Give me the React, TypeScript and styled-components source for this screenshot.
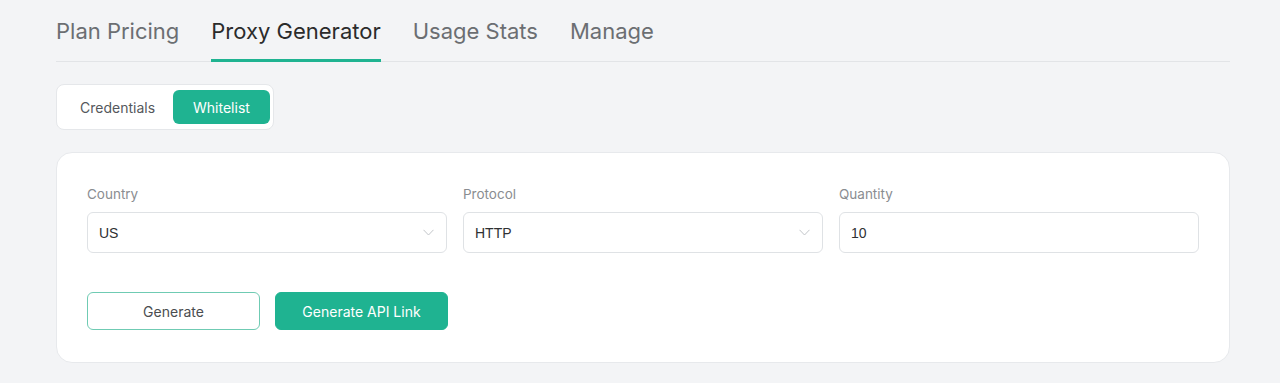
import React from 'react';
import styled, { createGlobalStyle } from 'styled-components';

const Global = createGlobalStyle`
  html, body {
    margin: 0;
    padding: 0;
    background: #f3f4f6;
    font-family: Inter, "Noto Sans", sans-serif;
  }
  * { box-sizing: border-box; }
`;

const Page = styled.div`
  padding: 0 50px 0 56px;
`;

const TabBar = styled.nav`
  display: flex;
  gap: 32px;
  padding-top: 16px;
  border-bottom: 1px solid #e2e4e7;
`;

const Tab = styled.div<{ active?: boolean }>`
  font-size: 22px;
  line-height: 30px;
  padding-bottom: 13px;
  font-weight: 400;
  color: ${p => (p.active ? '#2b2b2b' : '#6b6e72')};
  border-bottom: 3px solid ${p => (p.active ? '#1fb391' : 'transparent')};
  margin-bottom: -1px;
`;

const Segment = styled.div`
  display: inline-flex;
  margin-top: 22px;
  padding: 5px 3px 5px 5px;
  background: #fff;
  border: 1px solid #e5e7ea;
  border-radius: 8px;
`;

const SegButton = styled.button<{ active?: boolean }>`
  height: 34px;
  padding: 0 ${p => (p.active ? 20 : 18)}px;
  border: none;
  border-radius: 6px;
  font-family: inherit;
  font-size: 14px;
  background: ${p => (p.active ? '#1fb391' : 'transparent')};
  color: ${p => (p.active ? '#fff' : '#55585c')};
`;

const Card = styled.section`
  margin-top: 22px;
  background: #fff;
  border: 1px solid #e7e9ec;
  border-radius: 16px;
  padding: 31px 30px 32px 30px;
`;

const Fields = styled.div`
  display: grid;
  grid-template-columns: repeat(3, 1fr);
  gap: 16px;
`;

const Field = styled.div`
  display: flex;
  flex-direction: column;
`;

const Label = styled.label`
  font-size: 13.5px;
  line-height: 20px;
  color: #8a8d91;
  margin-bottom: 8px;
`;

const Box = styled.div`
  height: 41px;
  display: flex;
  align-items: center;
  justify-content: space-between;
  padding: 0 12px 0 11px;
  border: 1px solid #dfe2e5;
  border-radius: 6px;
  font-family: "Liberation Sans", Arial, sans-serif;
  font-size: 14px;
  color: #2f3133;
`;

const Actions = styled.div`
  display: flex;
  gap: 15px;
  margin-top: 39px;
`;

const Button = styled.button<{ primary?: boolean }>`
  width: 173px;
  height: 38px;
  border-radius: 6px;
  font-family: inherit;
  font-size: 14px;
  border: 1px solid ${p => (p.primary ? '#1fb391' : '#6fcbb3')};
  background: ${p => (p.primary ? '#1fb391' : '#fff')};
  color: ${p => (p.primary ? '#fff' : '#4a4d50')};
`;

const Chevron = () => (
  <svg width="11" height="7" viewBox="0 0 11 7" fill="none">
    <path d="M0.5 0.8 L5.5 6 L10.5 0.8" stroke="#c2c5c9" strokeWidth="1" />
  </svg>
);

export default function App() {
  return (
    <Page>
      <Global />
      <TabBar>
        <Tab>Plan Pricing</Tab>
        <Tab active>Proxy Generator</Tab>
        <Tab>Usage Stats</Tab>
        <Tab>Manage</Tab>
      </TabBar>

      <Segment>
        <SegButton>Credentials</SegButton>
        <SegButton active>Whitelist</SegButton>
      </Segment>

      <Card>
        <Fields>
          <Field>
            <Label>Country</Label>
            <Box>US<Chevron /></Box>
          </Field>
          <Field>
            <Label>Protocol</Label>
            <Box>HTTP<Chevron /></Box>
          </Field>
          <Field>
            <Label>Quantity</Label>
            <Box>10</Box>
          </Field>
        </Fields>
        <Actions>
          <Button>Generate</Button>
          <Button primary>Generate API Link</Button>
        </Actions>
      </Card>
    </Page>
  );
}
